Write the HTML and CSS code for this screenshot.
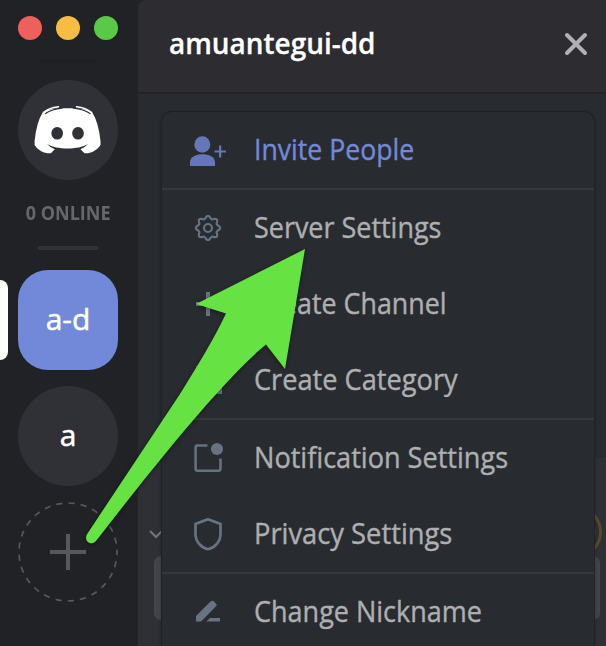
FILE: index.html
```html
<!DOCTYPE html>
<html lang="en">
<head>
<meta charset="utf-8">
<title>amuantegui-dd</title>
<link rel="stylesheet" href="styles.css">
</head>
<body>
<div class="app">
  <nav class="servers">
    <div class="lights"><i class="light red"></i><i class="light amber"></i><i class="light green"></i></div>
    <div class="shade"></div>
    <div class="server home">
      <svg width="100" height="100" viewBox="0 0 100 100">
        <path fill="#fff" d="M25 32C26 31 28 30 29 30C38 27.500 61 27.500 70 30C71 30 73 31 74 32Q80.500 42 82.500 61V65C78.500 71 72 73.800 66.500 73.300L62.500 69.200Q67 67.500 70 64C60 70 39 70 29 64Q32 67.500 36.800 69.200L32.800 73.300C27 73.800 20.500 71 16.600 65V61Q18.500 42 25 32Z"/>
        <path fill="none" stroke="#2f3136" stroke-width="1.300" stroke-linecap="round" d="M27.500 33.500Q34 29.300 44 28.200M72 33.500Q65.500 29.300 55.500 28.200"/>
        <path fill="none" stroke="#fff" stroke-width="1.500" stroke-linecap="round" d="M25.500 32.800Q31 27.500 40.500 26.700M73.500 32.800Q68 27.500 58.500 26.700"/>
        <ellipse cx="39.200" cy="53.300" rx="5.800" ry="6.300" fill="#2f3136"/><ellipse cx="60" cy="53.300" rx="5.800" ry="6.300" fill="#2f3136"/>
      </svg>
    </div>
    <div class="online"><span>0 ONLINE</span></div>
    <div class="rule"></div>
    <div class="server active"><i class="pill"></i><span>a-d</span></div>
    <div class="server"><span>a</span></div>
    <div class="add">
      <svg width="100" height="100" viewBox="0 0 100 100" fill="none" stroke="#57585c">
        <circle cx="50" cy="50" r="49" stroke-width="1.700" stroke-dasharray="6.200 6.118" stroke-dashoffset="3"/>
        <path stroke-width="4" d="M50 32v36M32 50h36"/>
      </svg>
    </div>
  </nav>
  <main class="panel">
    <header class="header">
      <h1><span>amuantegui-dd</span></h1>
      <svg width="26" height="26" viewBox="0 0 26 26"><path d="M4 4l18 18M22 4L4 22" fill="none" stroke="#b0b1b3" stroke-width="4" stroke-linecap="round"/></svg>
    </header>
    <section class="channels">
      <svg class="backdrop" width="468" height="554" viewBox="0 0 468 554">
        <path fill="#2e3035" d="M0 366H468V554H0z"/>
        <path fill="none" stroke="#72767d" stroke-width="2" d="M12 439l6 6 6-6"/>
        <rect x="16" y="464" width="446" height="64" rx="7" fill="#41444b"/>
        <g fill="none" stroke="#59472f" stroke-width="3"><circle cx="437" cy="440" r="25.500"/><circle cx="437" cy="440" r="19"/></g>
      </svg>
      <div class="menu">
        <div class="group">
          <div class="item invite">
            <svg width="40" height="40" viewBox="0 0 40 40" fill="#6577b9"><ellipse cx="16.300" cy="14.500" rx="8" ry="8.200"/><path d="M4 36v-4C4 21.500 29 21.500 29 32v4z"/><path d="M33 15.500h2.200v5H40v2h-4.800v5H33v-5h-4.500v-2H33z"/></svg>
            <span class="w1">Invite People</span>
          </div>
        </div>
        <div class="group">
          <div class="item">
            <svg width="40" height="40" viewBox="0 0 40 40" fill="none" stroke="#677282" stroke-width="2.200"><circle cx="22" cy="20" r="4"/><path stroke-linejoin="round" d="M19.900 9.300Q22 6.300 24.100 9.300Q25.500 12.500 28.200 10.900Q31.800 10.200 31.100 13.800Q29.500 16.500 32.700 17.900Q35.700 20 32.700 22.100Q29.500 23.500 31.100 26.200Q31.800 29.800 28.200 29.100Q25.500 27.500 24.100 30.700Q22 33.700 19.900 30.700Q18.500 27.500 15.800 29.100Q12.200 29.800 12.900 26.200Q14.500 23.500 11.300 22.100Q8.300 20 11.300 17.900Q14.500 16.500 12.900 13.800Q12.200 10.200 15.800 10.900Q18.500 12.500 19.900 9.300z"/></svg>
            <span class="w2">Server Settings</span>
          </div>
          <div class="item">
            <svg width="40" height="40" viewBox="0 0 40 40"><path fill="none" stroke="#677282" stroke-width="4" d="M22 8v24M10 20h24"/></svg>
            <span class="w3">Create Channel</span>
          </div>
          <div class="item">
            <svg width="40" height="40" viewBox="0 0 40 40" fill="#677282"><path d="M10 6h10l3 4h13v4H10zM10 14h4v20h-4zM32 14h4v20h-4zM10 30h26v4H10z"/></svg>
            <span class="w4">Create Category</span>
          </div>
        </div>
        <div class="group">
          <div class="item">
            <svg width="40" height="40" viewBox="0 0 40 40"><path fill="none" stroke="#677282" stroke-width="2.500" stroke-linejoin="round" d="M21.500 7.500H11.500Q9.600 7.500 9.600 9.400V30.800Q9.600 32.700 11.500 32.700H32.500Q34.500 32.700 34.500 30.800V20.500"/><circle cx="31" cy="11" r="6.100" fill="#677282"/></svg>
            <span class="w5">Notification Settings</span>
          </div>
          <div class="item">
            <svg width="40" height="40" viewBox="0 0 40 40"><path fill="none" stroke="#677282" stroke-width="2.700" d="M22 5.300L34.500 10V20C34.500 27.500 29 33.500 22 35.200C15 33.500 9.500 27.500 9.500 20V10z"/></svg>
            <span class="w6">Privacy Settings</span>
          </div>
        </div>
        <div class="group">
          <div class="item">
            <svg width="40" height="40" viewBox="0 0 40 40" fill="#677282"><path d="M10 29.500V24L24.500 9.500Q26.500 8 28 9.500L30.500 12.200Q31 13 30.500 13.800L15.200 29.500zM24 26h10v3.500H20.200z"/></svg>
            <span class="w7">Change Nickname</span>
          </div>
        </div>
      </div>
    </section>
  </main>
  <svg class="arrow" width="606" height="646" viewBox="0 0 606 646"><path fill="#66e343" d="M305 249L285 369L266 344.500C226 377 158 461 96 541C90 547 83 540 87.500 533.500L180 394C198 365 214 339 226 313.500L196 304z"/></svg>
</div>
</body>
</html>
```
FILE: styles.css
```css
* { box-sizing: border-box; }
body { margin: 0; background: #202225; font-family: "Open Sans", "Noto Sans", sans-serif; }
svg { display: block; flex: none; }
.app { position: relative; display: flex; width: 606px; height: 646px; overflow: hidden; background: #202225; }
.servers { width: 138px; flex: none; display: flex; flex-direction: column; align-items: center; padding-right: 2px; }
.lights { display: flex; gap: 14px; padding-top: 16px; height: 60px; }
.light { width: 24px; height: 24px; border-radius: 50%; }
.red { background: #ef5f5b; }
.amber { background: #f6bd42; }
.green { background: #59c948; }
.shade { width: 124px; height: 4px; margin-bottom: 16px; background: radial-gradient(ellipse at top, #1c1e20, #202225 70%); }
.server { position: relative; width: 100px; height: 100px; flex: none; display: flex; align-items: center; justify-content: center; margin-bottom: 16px; border-radius: 50%; background: #2f3136; color: #fff; font-size: 30px; -webkit-text-stroke: .5px; }
.server span { transform: translateY(-2px); }
.home { margin-bottom: 22px; }
.online { height: 22px; line-height: 22px; color: #65676a; font-size: 20px; font-weight: 700; white-space: nowrap; }
.online span { display: inline-block; transform: scaleX(.9); }
.rule { width: 60px; height: 4px; flex: none; margin: 22px 0 20px; background: #303236; }
.active { border-radius: 30px; background: #7289da; }
.pill { position: absolute; left: -26px; top: 10px; width: 16px; height: 80px; border-radius: 8px; background: #fff; }
.add { width: 100px; height: 100px; }
.panel { width: 468px; flex: none; display: flex; flex-direction: column; }
.header { height: 92px; flex: none; display: flex; align-items: center; justify-content: space-between; padding: 0 17px 4px 32px; background: #2c2c31; border-top-left-radius: 8px; }
.header h1 { margin: 0; color: #fff; font-size: 29px; font-weight: 600; line-height: 40px; -webkit-text-stroke: .3px; }
.header h1 span { display: inline-block; transform-origin: left; transform: translate(-1px, -1px) scaleX(.963); }
.channels { position: relative; height: 554px; padding: 20px 0 0 24px; background: #282b2f; border-top: 2px solid #202225; }
.backdrop { position: absolute; left: 0; top: -2px; }
.menu { position: relative; width: 432px; height: 560px; border-radius: 10px; background: #282b2f; box-shadow: 0 0 0 1px #202225, 0 1px 4px rgba(0, 0, 0, .35); margin-top: -2px; }
.group + .group { border-top: 2px solid #36393f; }
.item { height: 76px; display: flex; align-items: center; gap: 28px; padding-left: 24px; color: #aeafb0; font-size: 30px; }
.item span { white-space: nowrap; transform-origin: left; transform: translateY(-2px) scaleX(var(--fit)); -webkit-text-stroke: .4px; }
.w1 { --fit: .888; }
.w2 { --fit: .898; }
.w3 { --fit: .895; }
.w4 { --fit: .906; }
.w5 { --fit: .903; }
.w6 { --fit: .91; }
.w7 { --fit: .9; }
.invite { color: #7289da; }
.arrow { position: absolute; left: 0; top: 0; filter: drop-shadow(0 1px 2px rgba(0, 0, 0, .4)); }
```
